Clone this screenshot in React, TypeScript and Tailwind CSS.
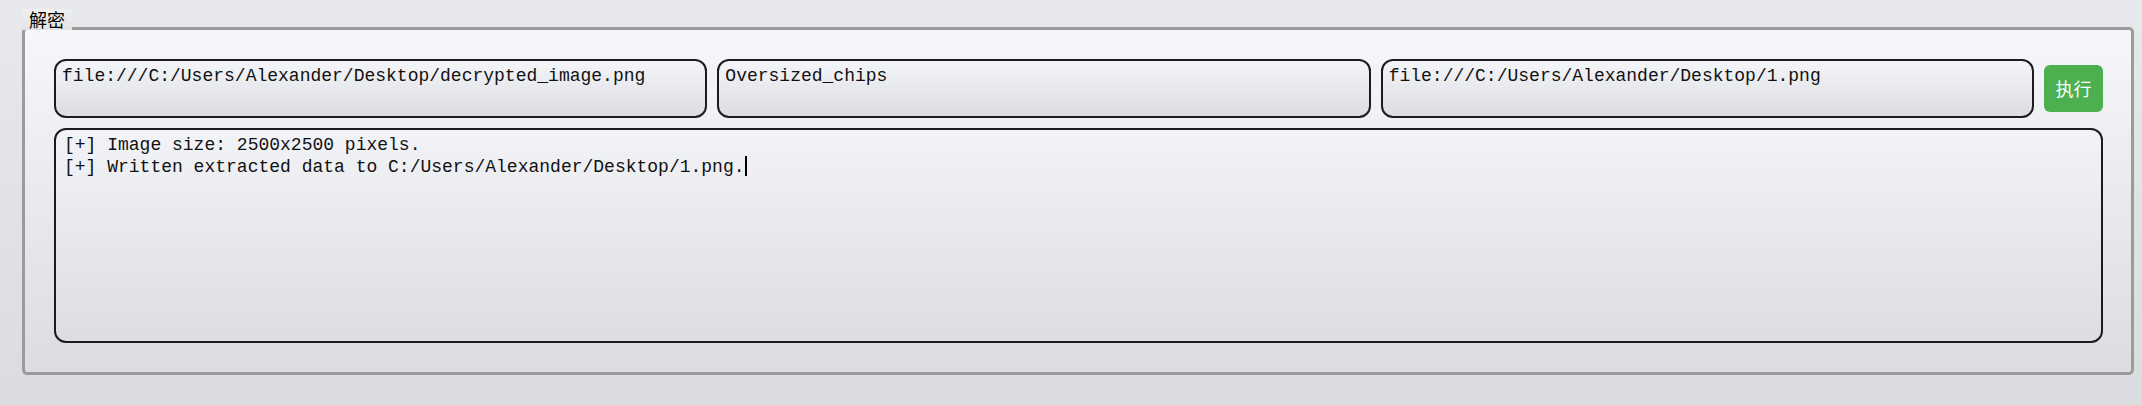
const mono = { fontFamily: '"Liberation Mono", "Courier New", monospace' };

function Field({ value }: { value: string }) {
  return (
    <div
      className="flex-1 h-[59px] border-2 border-[#1c1c1c] rounded-[12px] bg-gradient-to-b from-[#f4f5f8] to-[#dcdde1] pl-[6px] pt-[5px] text-[18px] leading-[21px] text-[#111] whitespace-pre overflow-hidden font-['Liberation_Mono',monospace]"
    >
      {value}
    </div>
  );
}

export default function App() {
  return (
    <div className="w-full h-[405px] bg-gradient-to-b from-[#e8e9ec] to-[#dbdcdf] pt-[9px] pr-[8px] pl-[22px]">
      <div className="flex flex-col">
        <div className="relative z-10 self-start h-[21px] px-[7px] bg-gradient-to-b from-[#efefef] to-[#e4e4e4] text-[18px] leading-[21px] text-black font-['Noto_Sans_CJK_SC',sans-serif]">
          解密
        </div>
        <div className="-mt-[3px] h-[348px] border-[3px] border-[#9b9b9b] rounded-[5px] bg-gradient-to-b from-[#f6f7fb] to-[#dcdde1] pt-[29px] pl-[29px] pr-[28px] flex flex-col gap-[10px]">
          <div className="flex items-start gap-[10px]">
            <Field value="file:///C:/Users/Alexander/Desktop/decrypted_image.png" />
            <Field value="Oversized_chips" />
            <Field value="file:///C:/Users/Alexander/Desktop/1.png" />
            <button className="mt-[6px] w-[59px] h-[47px] rounded-[6px] bg-[#4caf50] text-white text-[18px] font-['Noto_Sans_CJK_SC',sans-serif]">
              执行
            </button>
          </div>
          <div
            style={mono}
            className="h-[215px] border-2 border-[#1c1c1c] rounded-[12px] bg-gradient-to-b from-[#f2f3f7] to-[#dddee2] pl-[8px] pt-[5px] text-[18px] leading-[21px] text-[#111] whitespace-pre"
          >
            <div>[+] Image size: 2500x2500 pixels.</div>
            <div>
              [+] Written extracted data to C:/Users/Alexander/Desktop/1.png.
              <span className="inline-block w-[2px] h-[20px] bg-black align-[-4px]" />
            </div>
          </div>
        </div>
      </div>
    </div>
  );
}
